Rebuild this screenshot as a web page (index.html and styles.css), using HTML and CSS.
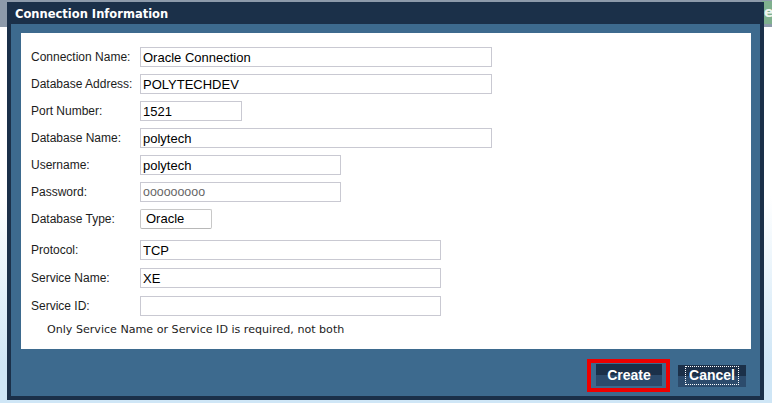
FILE: index.html
```html
<!DOCTYPE html>
<html>
<head>
<meta charset="utf-8">
<link rel="stylesheet" href="styles.css">
</head>
<body>
<div class="page">
  <div class="page-head"><span class="page-head-green">e</span></div>
  <div class="page-main"></div>
</div>

<div class="dialog">
  <div class="dialog-title">Connection Information</div>
  <div class="dialog-body">
    <div class="panel">
      <div class="row"><label class="lbl">Connection Name:</label><input class="field w-long" type="text" value="Oracle Connection"></div>
      <div class="row"><label class="lbl">Database Address:</label><input class="field w-long" type="text" value="POLYTECHDEV"></div>
      <div class="row"><label class="lbl">Port Number:</label><input class="field w-port" type="text" value="1521"></div>
      <div class="row"><label class="lbl">Database Name:</label><input class="field w-long" type="text" value="polytech"></div>
      <div class="row"><label class="lbl">Username:</label><input class="field w-user" type="text" value="polytech"></div>
      <div class="row"><label class="lbl">Password:</label><input class="field w-user pw" type="text" value="ooooooooo"></div>
      <div class="row"><label class="lbl">Database Type:</label><div class="select">Oracle</div></div>
      <div class="row row-gap"><label class="lbl">Protocol:</label><input class="field w-mid" type="text" value="TCP"></div>
      <div class="row row-s"><label class="lbl">Service Name:</label><input class="field w-mid" type="text" value="XE"></div>
      <div class="row row-s"><label class="lbl">Service ID:</label><input class="field w-mid" type="text" value=""></div>
      <div class="note">Only Service Name or Service ID is required, not both</div>
    </div>
    <div class="actions">
      <span class="highlight"><button class="btn">Create</button></span>
      <button class="btn btn-cancel"><span class="focus">Cancel</span></button>
    </div>
  </div>
</div>
</body>
</html>
```

FILE: styles.css
```css
* { box-sizing: border-box; }
html, body { margin: 0; padding: 0; }
body {
  width: 772px;
  height: 403px;
  overflow: hidden;
  position: relative;
  font-family: "Liberation Sans", Arial, sans-serif;
  background: #ffffff;
}

.page { display: flex; flex-direction: column; height: 403px; }
.page-head {
  height: 27px;
  background: #8d9aaa;
  display: flex;
  justify-content: flex-end;
  align-items: flex-start;
  padding-top: 1px;
}
.page-head-green {
  width: 10px;
  height: 23px;
  background: #7fb08e;
  color: #eef5ee;
  font: bold 14px "DejaVu Sans", sans-serif;
  line-height: 22px;
  padding-left: 2px;
  overflow: hidden;
}
.page-main {
  flex: 1;
  background: linear-gradient(to bottom, #ffffff 0%, #ffffff 45%, #cfe6f6 90%);
}

.dialog {
  position: absolute;
  left: 7px;
  top: 2px;
  width: 757px;
  height: 398px;
  background: #1b3049;
  padding: 0 4px 4px 4px;
  display: flex;
  flex-direction: column;
}
.dialog-title {
  height: 22px;
  color: #ffffff;
  font: bold 11.5px "DejaVu Sans", sans-serif;
  line-height: 22px;
  padding-left: 4px;
  padding-top: 1px;
}
.dialog-body {
  flex: 1;
  background: #3d6a8e;
  padding: 9px 9px 0 10px;
  display: flex;
  flex-direction: column;
}
.panel {
  height: 316px;
  background: #ffffff;
  padding: 14px 0 0 10px;
  display: flex;
  flex-direction: column;
}
.row {
  display: flex;
  align-items: center;
  height: 20px;
  margin-bottom: 7px;
}
.row-gap { margin-top: 4px; margin-bottom: 8px; }
.row-s { margin-bottom: 8px; }
.lbl {
  width: 109px;
  font-size: 12px;
  color: #1c1c1c;
}
.field {
  height: 20px;
  border: 1px solid #c9c9d2;
  padding: 0 2px;
  font-family: "Liberation Sans", Arial, sans-serif;
  font-size: 13px;
  color: #000;
  background: #fff;
  outline: none;
  margin: 0;
}
.w-long { width: 352px; }
.w-port { width: 102px; }
.w-user { width: 201px; }
.w-mid { width: 301px; }
.pw { color: #666; font-size: 12.4px; }
.select {
  width: 72px;
  height: 20px;
  border: 1px solid #c8c8c8;
  border-bottom-color: #b8b8b8;
  border-radius: 2px;
  padding-left: 5px;
  font-size: 13px;
  line-height: 18px;
  color: #000;
}
.note {
  margin-top: -2px;
  padding-left: 16px;
  font: 11.1px "DejaVu Sans", sans-serif;
  line-height: 16px;
  color: #1c1c1c;
}

.actions {
  display: flex;
  justify-content: flex-end;
  align-items: center;
  padding-top: 10px;
  padding-right: 5px;
  gap: 8px;
}
.highlight {
  display: inline-flex;
  border: 4px solid #ee0000;
  padding: 1px 4px 2px 5px;
}
.btn {
  width: 66px;
  height: 22px;
  border: 0;
  margin: 0;
  padding: 0;
  background: linear-gradient(to bottom, #1b3049 0%, #1b3049 50%, #2c4b6c 50%, #2c4b6c 100%);
  color: #ffffff;
  font: bold 14px "Liberation Sans", Arial, sans-serif;
  line-height: 20px;
  display: flex;
  align-items: center;
  justify-content: center;
}
.btn-cancel {
  width: 68px;
  padding: 1px 7px 2px 7px;
  align-items: stretch;
}
.focus {
  flex: 1;
  border: 1px dotted #ffffff;
  display: flex;
  align-items: center;
  justify-content: center;
  line-height: 17px;
}
```
